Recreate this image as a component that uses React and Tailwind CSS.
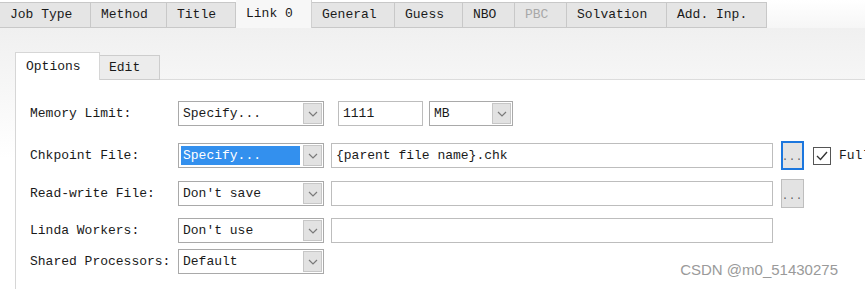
import React from "react";

const tabs = [
  { name: "Job Type", w: 91 },
  { name: "Method", w: 76 },
  { name: "Title", w: 69 },
  { name: "Link 0", w: 76, active: true },
  { name: "General", w: 83 },
  { name: "Guess", w: 68 },
  { name: "NBO", w: 52 },
  { name: "PBC", w: 52, disabled: true },
  { name: "Solvation", w: 100 },
  { name: "Add. Inp.", w: 100 },
];

const Chevron = () => (
  <svg width="10" height="6" viewBox="0 0 10 6" fill="none">
    <path d="M1 1l4 4 4-4" stroke="#7a7a7a" strokeWidth="1.2" />
  </svg>
);

// combobox in the old windows style
const Combo = ({ value, width = 146, selected = false }) => (
  <div className="flex h-[25px] shrink-0 border border-[#a9a9a9] bg-white" style={{ width }}>
    <div className="flex flex-1 items-center p-[2px] min-w-0">
      <span className={"flex h-full flex-1 items-center pl-[2px] whitespace-pre " + (selected ? "bg-[#3390ee] text-white" : "")}>
        {value}
      </span>
    </div>
    <div className="m-[1px] flex w-[19px] items-center justify-center border border-[#c6c6c6] bg-[#e2e2e2]">
      <Chevron />
    </div>
  </div>
);

const TextBox = ({ value = "", className = "" }) => (
  <div className={"flex h-[25px] shrink-0 items-center border border-[#bdbdbd] bg-white pl-[4px] whitespace-pre " + className}>
    {value}
  </div>
);

const DotsButton = ({ focused }) => (
  <div
    className={
      "ml-[8px] flex h-[29px] w-[23px] shrink-0 items-end justify-center pb-[5px] text-[10px] leading-none tracking-[1px] text-[#555] bg-[#e3e3e3] " +
      (focused ? "border-2 border-[#1c77de]" : "border border-[#bebebe]")
    }
  >
    ...
  </div>
);

export default function App() {
  return (
    <div
      className="relative flex h-[289px] w-[865px] flex-col overflow-hidden bg-white text-[13px] text-[#1a1a1a]"
      style={{ fontFamily: '"Liberation Mono", "DejaVu Sans Mono", monospace' }}
    >
      {/* top tab strip */}
      <div className="flex h-[28px] shrink-0 items-end">
        {tabs.map((t) => (
          <div
            key={t.name}
            style={{ width: t.w }}
            className={
              "flex shrink-0 items-center pl-[10px] whitespace-pre " +
              (t.active
                ? "h-[28px] bg-[#f7f7f7] border-r border-[#d0d0d0]"
                : "h-[26px] border-t border-r border-b border-[#c8c8c8] bg-[#e5e5e5] ") +
              (t.disabled ? "text-[#a8a8a8]" : "")
            }
          >
            {t.name}
          </div>
        ))}
        <div className="h-full flex-1 bg-gradient-to-b from-white to-[#f6f6f6]" />
      </div>

      {/* panel */}
      <div className="flex flex-1 flex-col bg-gradient-to-b from-[#f0f0f0] via-white to-white">
        <div className="mt-[24px] flex h-[28px] items-end pl-[15px]">
          <div className="flex h-[28px] w-[85px] items-center border-t border-l border-r border-[#d6d6d6] bg-white pl-[10px]">
            Options
          </div>
          <div className="flex h-[25px] w-[60px] items-center border-t border-r border-b border-[#cdcdcd] bg-[#ececec] pl-[9px]">
            Edit
          </div>
          <div className="h-px flex-1 bg-[#dcdcdc]" />
        </div>

        <div className="ml-[15px] flex flex-1 flex-col border-l border-[#d6d6d6] bg-white pl-[14px] pt-[21px]">
          <div className="flex h-[25px] items-center">
            <div className="w-[148px] shrink-0">Memory Limit:</div>
            <Combo value="Specify..." />
            <TextBox value="1111" className="ml-[14px] w-[85px] h-[24px]" />
            <div className="ml-[6px]">
              <Combo value="MB" width={84} />
            </div>
          </div>

          <div className="mt-[17px] flex h-[25px] items-center">
            <div className="w-[148px] shrink-0">Chkpoint File:</div>
            <Combo value="Specify..." selected />
            <TextBox value="{parent file name}.chk" className="ml-[7px] w-[442px]" />
            <DotsButton focused />
            <div className="ml-[9px] flex h-[18px] w-[18px] shrink-0 items-center justify-center border border-[#555] bg-white">
              <svg width="12" height="10" viewBox="0 0 12 10" fill="none">
                <path d="M1 5l3.5 3.5L11 1" stroke="#333" strokeWidth="1.4" />
              </svg>
            </div>
            <div className="ml-[8px] whitespace-nowrap">Full</div>
          </div>

          <div className="mt-[13px] flex h-[25px] items-center">
            <div className="w-[148px] shrink-0">Read-write File:</div>
            <Combo value="Don't save" />
            <TextBox className="ml-[7px] w-[442px]" />
            <DotsButton />
          </div>

          <div className="mt-[12px] flex h-[25px] items-center">
            <div className="w-[148px] shrink-0">Linda Workers:</div>
            <Combo value="Don't use" />
            <TextBox className="ml-[7px] w-[442px]" />
          </div>

          <div className="mt-[6px] flex h-[25px] items-center">
            <div className="w-[148px] shrink-0 whitespace-nowrap">Shared Processors:</div>
            <Combo value="Default" />
          </div>
        </div>
      </div>

      <div
        className="absolute bottom-[8px] right-[27px] text-[15px] text-[#9a9a9a]"
        style={{ fontFamily: '"Liberation Sans", Arial, sans-serif' }}
      >
        CSDN @m0_51430275
      </div>
    </div>
  );
}
